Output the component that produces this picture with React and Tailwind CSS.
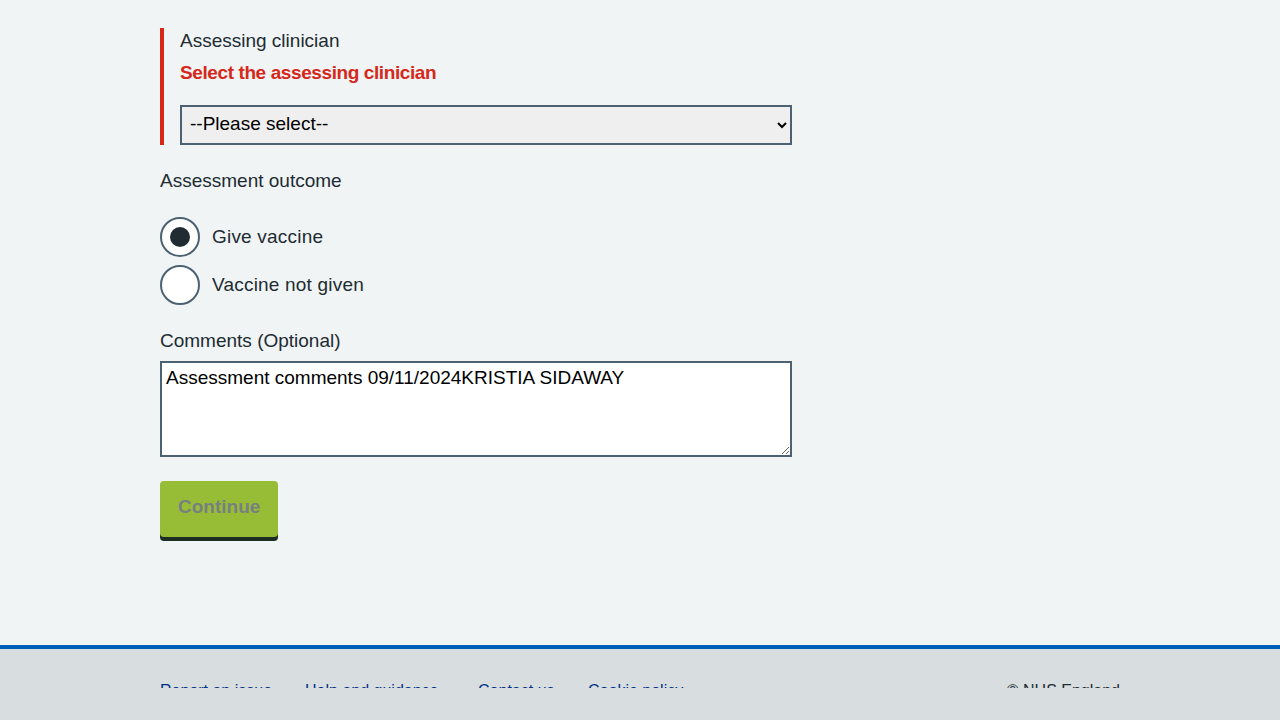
import { useState } from "react";

const font = { fontFamily: '"Liberation Sans", Arial, sans-serif' };

function Radio({ label, checked, onChange }) {
  return (
    <label className="flex items-center gap-3 cursor-pointer">
      <span className="flex h-10 w-10 items-center justify-center rounded-full border-2 border-[#4c6272] bg-white">
        {checked && <span className="h-5 w-5 rounded-full bg-[#212b32]"></span>}
      </span>
      <input type="radio" className="sr-only" checked={checked} onChange={onChange} />
      <span className="text-[19px] tracking-[0.2px] text-[#212b32]">{label}</span>
    </label>
  );
}

export default function App() {
  const [outcome, setOutcome] = useState("give");

  return (
    <div className="min-h-screen flex flex-col bg-[#f0f4f5]" style={font}>
      <main className="flex-1 pt-[28px] pb-[104px]">
        <div className="mx-auto w-[960px]">
          <div className="w-[632px]">
            {/* error group */}
            <div className="border-l-4 border-[#d5281b] pl-4 pt-[1px]">
              <div className="text-[19px] leading-[24px] text-[#212b32]">
                Assessing clinician
              </div>
              <div className="mt-[8px] text-[19px] leading-[24px] font-bold tracking-[-0.4px] text-[#d5281b]">
                Select the assessing clinician
              </div>
              <select className="mt-[20px] block h-10 w-full border-2 border-[#4c6272] bg-[#efefef] pl-1 pr-2 pb-[3px] text-[19px] text-black">
                <option>--Please select--</option>
              </select>
            </div>

            <div className="mt-[24px] text-[19px] leading-[24px] text-[#212b32]">
              Assessment outcome
            </div>
            <div className="mt-[24px] flex flex-col gap-2">
              <Radio
                label="Give vaccine"
                checked={outcome === "give"}
                onChange={() => setOutcome("give")}
              />
              <Radio
                label="Vaccine not given"
                checked={outcome === "not"}
                onChange={() => setOutcome("not")}
              />
            </div>

            <div className="mt-[24px] text-[19px] leading-[24px] text-[#212b32]">
              Comments (Optional)
            </div>
            <textarea
              className="mt-[8px] block h-24 w-full border-2 border-[#4c6272] bg-white px-1 py-[3px] text-[19px] leading-[24px] text-black"
              defaultValue="Assessment comments 09/11/2024KRISTIA SIDAWAY"
            />

            <button
              disabled
              className="mt-6 h-14 rounded-[4px] bg-[#97bd36] px-[18px] pb-[4px] text-[19px] font-bold text-[#77807f] shadow-[0_4px_0_#1c2e22]"
            >
              Continue
            </button>
          </div>
        </div>
      </main>

      <footer className="h-[75px] border-t-4 border-[#005eb8] bg-[#d8dde0]">
        <div className="mx-auto mt-[32px] flex h-[7px] w-[960px] items-start justify-between overflow-hidden">
          <ul className="flex gap-[33px] text-[16px] leading-[20px] text-[#003087]">
            <li><a href="#">Report an issue</a></li>
            <li className="w-[140px]"><a href="#">Help and guidance</a></li>
            <li className="w-[77px]"><a href="#">Contact us</a></li>
            <li><a href="#">Cookie policy</a></li>
          </ul>
          <p className="text-[16px] leading-[20px] text-[#212b32]">© NHS England</p>
        </div>
      </footer>
    </div>
  );
}
